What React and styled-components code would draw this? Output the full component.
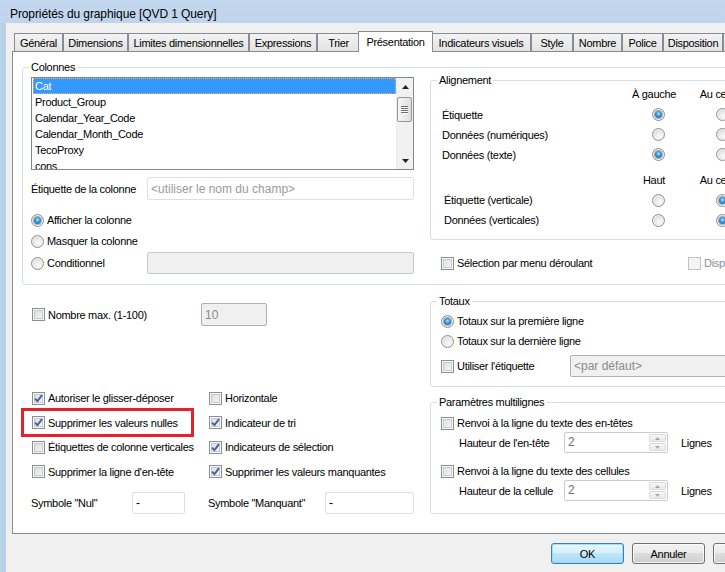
import React from 'react';
import styled, { createGlobalStyle, css } from 'styled-components';

const Global = createGlobalStyle`
  *, *::before, *::after { box-sizing: border-box; }
  html, body { margin: 0; padding: 0; width: 725px; height: 572px; overflow: hidden; background: #f0f0f0; }
  body {
    font-family: "Liberation Sans", Arial, sans-serif;
    font-size: 11px;
    letter-spacing: -0.3px;
    color: #000;
  }
`;

const Window = styled.div`
  width: 885px;
  display: flex;
  flex-direction: column;
`;

const TitleBar = styled.div`
  height: 23px;
  padding: 5px 0 0 10px;
  background: linear-gradient(to bottom, #c3d7ee, #bfd5ed);
  display: flex;
  align-items: center;
  font-size: 12px;
  letter-spacing: -0.1px;
  white-space: nowrap;
`;

const Frame = styled.div`
  display: flex;
  height: 549px;
`;

const SideFrame = styled.div`
  width: 6px;
  flex-shrink: 0;
  background: #bad1ea;
`;

const Body = styled.div`
  flex: 1;
  background: #f0f0f0;
  padding: 8px 12px 0 6px;
  display: flex;
  flex-direction: column;
`;

const TabRow = styled.div`
  display: flex;
  align-items: flex-end;
  height: 20px;
  padding-left: 2px;
  position: relative;
  z-index: 1;
`;

const Tab = styled.div`
  width: ${p => p.$w}px;
  height: 18px;
  flex-shrink: 0;
  border: 1px solid #898c95;
  border-bottom: none;
  background: linear-gradient(to bottom, #f3f3f3, #e3e3e3);
  display: flex;
  align-items: center;
  justify-content: center;
  white-space: nowrap;
  ${p => p.$active && css`
    height: 21px;
    margin: 0 -2px -1px;
    background: #fff;
    position: relative;
    z-index: 2;
  `}
`;

const Panel = styled.div`
  height: 483px;
  border: 1px solid #898c95;
  background: #fff;
  display: flex;
  flex-direction: column;
  overflow: hidden;
`;

const Group = styled.fieldset`
  margin: ${p => p.$mt || 0}px ${p => p.$mr || 0}px 0 ${p => p.$ml || 0}px;
  padding: 0;
  min-width: 0;
  border: 1px solid #d5dfe5;
  border-radius: 3px;
`;

const Legend = styled.legend`
  padding: 0 2px;
  margin-left: 6px;
  line-height: 13px;
  white-space: nowrap;
`;

const TwoCol = styled.div`
  display: grid;
  grid-template-columns: 383px 1fr;
  column-gap: 16px;
  padding: 0 0 ${p => p.$pb || 0}px ${p => p.$pl || 0}px;
`;

const Stack = styled.div`
  display: flex;
  flex-direction: column;
  padding-top: ${p => p.$pt || 0}px;
  min-width: 0;
`;

const GroupBody = styled.div`
  display: flex;
  flex-direction: column;
  padding: ${p => p.$pt || 0}px 0 ${p => p.$pb || 0}px ${p => p.$pl || 0}px;
`;

const ListBox = styled.div`
  height: 93px;
  border: 1px solid #828790;
  background: #fff;
  display: flex;
  overflow: hidden;
`;

const ListItems = styled.div`
  flex: 1;
  padding-left: 1px;
  overflow: hidden;
`;

const ListItem = styled.div`
  height: 16px;
  line-height: 16px;
  padding-left: 2px;
  white-space: nowrap;
  ${p => p.$sel && css`
    background: #3399ff;
    color: #fff;
    outline: 1px dotted #f3b36e;
    outline-offset: -1px;
  `}
`;

const ScrollBar = styled.div`
  width: 17px;
  flex-shrink: 0;
  display: flex;
  flex-direction: column;
  background: #f1f1f1;
  border-left: 1px solid #ececec;
`;

const ScrollBtn = styled.div`
  height: 17px;
  flex-shrink: 0;
  display: flex;
  align-items: center;
  justify-content: center;
`;

const ScrollTrack = styled.div`
  flex: 1;
  padding: 2px 1px 0 0;
`;

const Thumb = styled.div`
  height: 25px;
  border: 1px solid #979797;
  border-radius: 2px;
  background: linear-gradient(to right, #f5f5f5, #dedede);
  display: flex;
  flex-direction: column;
  align-items: center;
  justify-content: center;
  gap: 1px;
`;

const Grip = styled.div`
  width: 7px;
  height: 1px;
  background: #6f6f6f;
  box-shadow: 0 1px 0 #fff;
`;

const FieldRow = styled.div`
  display: flex;
  align-items: center;
  height: ${p => p.$h || 16}px;
  margin-top: ${p => p.$mt || 0}px;
  padding-left: ${p => p.$pl || 0}px;
  flex-shrink: 0;
`;

const FieldLabel = styled.div`
  width: ${p => p.$w}px;
  flex-shrink: 0;
  white-space: nowrap;
  padding-left: ${p => p.$pl || 0}px;
  display: flex;
  align-items: center;
`;

const boxVariants = {
  normal: css`background: #fff; border-color: #dcdfe4; color: #000;`,
  placeholder: css`background: #fff; border-color: #dcdfe4; color: #9a9a9a;`,
  disabled: css`background: #f0f0f0; border-color: #c8c9cc; color: #6d6d6d;`,
  dim: css`background: #f0f0f0; border-color: #aeb0b4; color: #8a8a8a;`,
};

const TextBox = styled.div`
  width: ${p => p.$w}px;
  height: ${p => p.$h}px;
  flex-shrink: 0;
  border: 1px solid;
  border-radius: 2px;
  padding: 0 3px;
  display: flex;
  align-items: center;
  font-size: 12px;
  letter-spacing: 0;
  white-space: nowrap;
  overflow: hidden;
  ${p => boxVariants[p.$v || 'normal']}
`;

const Label = styled.label`
  display: inline-flex;
  align-items: center;
  gap: 3px;
  white-space: nowrap;
  color: ${p => (p.$disabled ? '#8d8d8d' : '#000')};
`;

const Box = styled.span`
  width: 13px;
  height: 13px;
  flex-shrink: 0;
  border: 1px solid ${p => (p.$disabled ? '#c3c3c3' : '#8e8f8f')};
  background: ${p => (p.$disabled ? '#f4f4f4' : 'linear-gradient(135deg, #d6d8dc, #fafafa)')};
  box-shadow: ${p => (p.$disabled ? 'none' : 'inset 0 0 0 1px #f6f6f6, inset 0 0 0 2px #c7cbd1')};
  display: flex;
  align-items: center;
  justify-content: center;
`;

const RadioCircle = styled.span`
  width: 13px;
  height: 13px;
  flex-shrink: 0;
  border-radius: 50%;
  border: 1px solid #8e8f8f;
  background: radial-gradient(circle at 60% 65%, #fbfbfb 0, #e6e6e6 50%, #c9c9c9 100%);
  box-shadow: inset 0 0 0 1px #f2f2f2;
  display: flex;
  align-items: center;
  justify-content: center;
`;

const Dot = styled.span`
  width: 7px;
  height: 7px;
  border-radius: 50%;
  background: radial-gradient(circle at 50% 40%, #b5ecff 0, #3d9ad9 40%, #0f4d8c 100%);
  box-shadow: 0 0 0 1px rgba(20, 60, 110, 0.35);
`;

const CheckMark = () => (
  <svg width="9" height="9" viewBox="0 0 9 9">
    <path d="M1 4.6 L3.4 7.2 L8 1.2" fill="none" stroke="#45609a" strokeWidth="1.9" strokeLinejoin="round" />
  </svg>
);

const Check = ({ checked, disabled, children }) => (
  <Label $disabled={disabled}>
    <Box $disabled={disabled}>{checked && <CheckMark />}</Box>
    {children && <span>{children}</span>}
  </Label>
);

const Radio = ({ checked, children }) => (
  <Label>
    <RadioCircle>{checked && <Dot />}</RadioCircle>
    {children && <span>{children}</span>}
  </Label>
);

const AlignRow = styled.div`
  display: grid;
  grid-template-columns: 180px 72px 56px 64px;
  align-items: center;
  height: ${p => p.$h}px;
  margin-top: ${p => p.$mt || 0}px;
  flex-shrink: 0;
`;

const AlignLabel = styled.span`
  white-space: nowrap;
  padding-left: ${p => p.$indent || 0}px;
`;

const AlignHead = styled.span`
  justify-self: center;
  white-space: nowrap;
  padding-right: ${p => p.$pr || 0}px;
`;

const AlignCell = styled.span`
  justify-self: center;
  display: flex;
`;

const CheckGrid = styled.div`
  display: grid;
  grid-template-columns: 177px 1fr;
  grid-auto-rows: 24.5px;
  margin-top: 60px;
  padding-left: 1px;
`;

const CheckCell = styled.div`
  display: flex;
  align-items: center;
  position: relative;
  ${p => p.$marked && css`
    &::after {
      content: '';
      position: absolute;
      left: -11px;
      top: -2.5px;
      width: 173px;
      height: 29px;
      border: 3px solid #e8202a;
      pointer-events: none;
    }
  `}
`;

const Spacer = styled.span`
  width: ${p => p.$w}px;
  flex-shrink: 0;
`;

const Spin = styled.div`
  width: 104px;
  height: 21px;
  flex-shrink: 0;
  border: 1px solid #c9ccd0;
  border-radius: 2px;
  background: #fff;
  display: flex;
  color: #6d6d6d;
  font-size: 12px;
  letter-spacing: 0;
`;

const SpinText = styled.span`
  flex: 1;
  padding-left: 3px;
  line-height: 18px;
`;

const SpinBtns = styled.div`
  width: 18px;
  display: flex;
  flex-direction: column;
  gap: 1px;
  padding: 1px 1px 1px 0;
`;

const SpinBtn = styled.div`
  flex: 1;
  border: 1px solid #dadada;
  border-radius: 2px;
  background: linear-gradient(to bottom, #f7f7f7, #e9e9e9);
  display: flex;
  align-items: center;
  justify-content: center;
`;

const ButtonRow = styled.div`
  display: flex;
  justify-content: flex-end;
  gap: 8px;
  margin-top: 9px;
`;

const Button = styled.div`
  width: 73px;
  height: 21px;
  border-radius: 3px;
  display: flex;
  align-items: center;
  justify-content: center;
  border: 1px solid ${p => (p.$default ? '#3c7fb1' : '#707070')};
  background: ${p =>
    p.$default
      ? 'linear-gradient(to bottom, #eaf6fd 0%, #d9f0fc 45%, #bee6fd 50%, #a7d9f5 100%)'
      : 'linear-gradient(to bottom, #f2f2f2 0%, #ebebeb 45%, #dddddd 50%, #cfcfcf 100%)'};
  box-shadow: inset 0 0 0 1px ${p => (p.$default ? 'rgba(140,220,255,0.8)' : 'rgba(255,255,255,0.75)')};
`;

const Arrow = ({ up, color = '#222', w = 7, h = 4 }) => (
  <svg width={w} height={h} viewBox={`0 0 ${w} ${h}`}>
    <path d={up ? `M0 ${h} L${w / 2} 0 L${w} ${h} Z` : `M0 0 L${w / 2} ${h} L${w} 0 Z`} fill={color} />
  </svg>
);

const tabs = [
  { label: 'Général', w: 49 },
  { label: 'Dimensions', w: 65 },
  { label: 'Limites dimensionnelles', w: 121 },
  { label: 'Expressions', w: 68 },
  { label: 'Trier', w: 43 },
  { label: 'Présentation', w: 75, active: true },
  { label: 'Indicateurs visuels', w: 100 },
  { label: 'Style', w: 42 },
  { label: 'Nombre', w: 49 },
  { label: 'Police', w: 41 },
  { label: 'Disposition', w: 60 },
  { label: 'Titre', w: 40 },
];

const columns = ['Cat', 'Product_Group', 'Calendar_Year_Code', 'Calendar_Month_Code', 'TecoProxy', 'cons'];

const alignTop = [
  { label: 'Étiquette', v: [1, 0, 0] },
  { label: 'Données (numériques)', v: [0, 0, 1] },
  { label: 'Données (texte)', v: [1, 0, 0] },
];
const alignVert = [
  { label: 'Étiquette (verticale)', v: [0, 1, 0] },
  { label: 'Données (verticales)', v: [0, 1, 0] },
];

const checks = [
  { label: 'Autoriser le glisser-déposer', c: true },
  { label: 'Horizontale', c: false },
  { label: 'Supprimer les valeurs nulles', c: true, marked: true },
  { label: 'Indicateur de tri', c: true },
  { label: 'Étiquettes de colonne verticales', c: false },
  { label: 'Indicateurs de sélection', c: true },
  { label: "Supprimer la ligne d'en-tête", c: false },
  { label: 'Supprimer les valeurs manquantes', c: true },
];

const SpinBox = ({ value }) => (
  <Spin>
    <SpinText>{value}</SpinText>
    <SpinBtns>
      <SpinBtn><Arrow up w={5} h={3} color="#a6a6a6" /></SpinBtn>
      <SpinBtn><Arrow w={5} h={3} color="#a6a6a6" /></SpinBtn>
    </SpinBtns>
  </Spin>
);

export default function App() {
  return (
    <>
      <Global />
      <Window>
        <TitleBar>Propriétés du graphique [QVD 1 Query]</TitleBar>
        <Frame>
          <SideFrame />
          <Body>
            <TabRow>
              {tabs.map(t => (
                <Tab key={t.label} $w={t.w} $active={t.active}>{t.label}</Tab>
              ))}
            </TabRow>
            <Panel>
              <Group $mt={9} $ml={9} $mr={9}>
                <Legend>Colonnes</Legend>
                <TwoCol $pl={8} $pb={10}>
                  <Stack $pt={3}>
                    <ListBox>
                      <ListItems>
                        {columns.map((c, i) => (
                          <ListItem key={c} $sel={i === 0}>{c}</ListItem>
                        ))}
                      </ListItems>
                      <ScrollBar>
                        <ScrollBtn><Arrow up /></ScrollBtn>
                        <ScrollTrack>
                          <Thumb><Grip /><Grip /><Grip /><Grip /></Thumb>
                        </ScrollTrack>
                        <ScrollBtn><Arrow /></ScrollBtn>
                      </ScrollBar>
                    </ListBox>
                    <FieldRow $h={23} $mt={7}>
                      <FieldLabel $w={116}>Étiquette de la colonne</FieldLabel>
                      <TextBox $w={267} $h={23} $v="placeholder">&lt;utiliser le nom du champ&gt;</TextBox>
                    </FieldRow>
                    <FieldRow $mt={12}><Radio checked>Afficher la colonne</Radio></FieldRow>
                    <FieldRow $mt={5}><Radio>Masquer la colonne</Radio></FieldRow>
                    <FieldRow $h={22} $mt={3}>
                      <FieldLabel $w={116}><Radio>Conditionnel</Radio></FieldLabel>
                      <TextBox $w={267} $h={22} $v="disabled" />
                    </FieldRow>
                  </Stack>
                  <Stack>
                    <Group>
                      <Legend>Alignement</Legend>
                      <GroupBody $pl={11} $pb={9}>
                        <AlignRow $h={14}>
                          <span />
                          <AlignHead $pr={8}>À gauche</AlignHead>
                          <AlignHead>Au centre</AlignHead>
                          <AlignHead>À droite</AlignHead>
                        </AlignRow>
                        {alignTop.map((r, i) => (
                          <AlignRow key={r.label} $h={20} $mt={i === 0 ? 3.5 : 0}>
                            <AlignLabel>{r.label}</AlignLabel>
                            {r.v.map((v, j) => (
                              <AlignCell key={j}><Radio checked={!!v} /></AlignCell>
                            ))}
                          </AlignRow>
                        ))}
                        <AlignRow $h={14} $mt={8.5}>
                          <span />
                          <AlignHead $pr={8}>Haut</AlignHead>
                          <AlignHead>Au centre</AlignHead>
                          <AlignHead>Bas</AlignHead>
                        </AlignRow>
                        {alignVert.map((r, i) => (
                          <AlignRow key={r.label} $h={20} $mt={i === 0 ? 3 : 0}>
                            <AlignLabel $indent={2}>{r.label}</AlignLabel>
                            {r.v.map((v, j) => (
                              <AlignCell key={j}><Radio checked={!!v} /></AlignCell>
                            ))}
                          </AlignRow>
                        ))}
                      </GroupBody>
                    </Group>
                    <FieldRow $mt={15} $pl={11}>
                      <FieldLabel $w={247}><Check>Sélection par menu déroulant</Check></FieldLabel>
                      <Check disabled>Disposition des colonnes</Check>
                    </FieldRow>
                  </Stack>
                </TwoCol>
              </Group>

              <TwoCol $pl={18}>
                <Stack $pt={18}>
                  <FieldRow $h={23} $pl={1}>
                    <FieldLabel $w={169}><Check>Nombre max. (1-100)</Check></FieldLabel>
                    <TextBox $w={66} $h={23} $v="dim">10</TextBox>
                  </FieldRow>
                  <CheckGrid>
                    {checks.map(c => (
                      <CheckCell key={c.label} $marked={c.marked}>
                        <Check checked={c.c}>{c.label}</Check>
                      </CheckCell>
                    ))}
                  </CheckGrid>
                  <FieldRow $h={22} $mt={8}>
                    <FieldLabel $w={101}>Symbole "Nul"</FieldLabel>
                    <TextBox $w={53} $h={22}>-</TextBox>
                    <Spacer $w={23} />
                    <FieldLabel $w={117}>Symbole "Manquant"</FieldLabel>
                    <TextBox $w={89} $h={22}>-</TextBox>
                  </FieldRow>
                </Stack>
                <Stack>
                  <Group $mt={10}>
                    <Legend>Totaux</Legend>
                    <GroupBody $pl={10} $pt={3} $pb={9}>
                      <FieldRow $h={20}><Radio checked>Totaux sur la première ligne</Radio></FieldRow>
                      <FieldRow $h={20}><Radio>Totaux sur la dernière ligne</Radio></FieldRow>
                      <FieldRow $h={22} $mt={4}>
                        <FieldLabel $w={129}><Check>Utiliser l'étiquette</Check></FieldLabel>
                        <TextBox $w={220} $h={22} $v="dim">&lt;par défaut&gt;</TextBox>
                      </FieldRow>
                    </GroupBody>
                  </Group>
                  <Group $mt={9}>
                    <Legend>Paramètres multilignes</Legend>
                    <GroupBody $pl={10} $pt={6} $pb={12}>
                      <FieldRow><Check>Renvoi à la ligne du texte des en-têtes</Check></FieldRow>
                      <FieldRow $h={21} $mt={1} $pl={18}>
                        <FieldLabel $w={105}>Hauteur de l'en-tête</FieldLabel>
                        <SpinBox value="2" />
                        <Spacer $w={13} />
                        <span>Lignes</span>
                      </FieldRow>
                      <FieldRow $mt={10}><Check>Renvoi à la ligne du texte des cellules</Check></FieldRow>
                      <FieldRow $h={21} $mt={1} $pl={18}>
                        <FieldLabel $w={105}>Hauteur de la cellule</FieldLabel>
                        <SpinBox value="2" />
                        <Spacer $w={13} />
                        <span>Lignes</span>
                      </FieldRow>
                    </GroupBody>
                  </Group>
                </Stack>
              </TwoCol>
            </Panel>
            <ButtonRow>
              <Button $default>OK</Button>
              <Button>Annuler</Button>
              <Button>Appliquer</Button>
              <Button>Aide</Button>
            </ButtonRow>
          </Body>
          <SideFrame />
        </Frame>
      </Window>
    </>
  );
}
